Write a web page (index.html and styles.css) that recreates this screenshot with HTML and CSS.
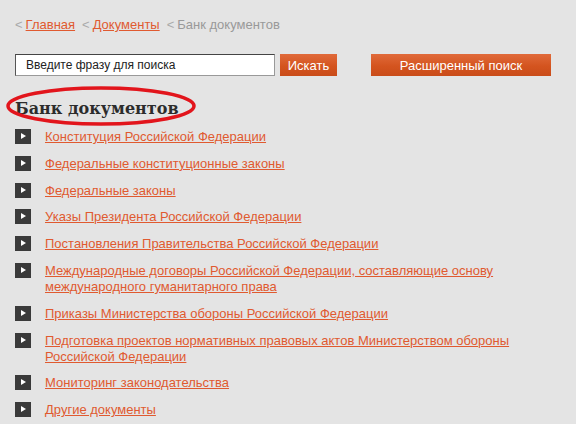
FILE: index.html
```html
<!DOCTYPE html>
<html lang="ru">
<head>
<meta charset="utf-8">
<link rel="stylesheet" href="styles.css">
</head>
<body>
<div class="page">
  <nav class="crumbs">
    <span class="sep">&lt;</span><a href="#">Главная</a>
    <span class="sep">&lt;</span><a href="#">Документы</a>
    <span class="sep">&lt;</span><span class="current">Банк документов</span>
  </nav>
  <div class="search">
    <div class="field">Введите фразу для поиска</div>
    <button class="btn btn-go">Искать</button>
    <button class="btn btn-adv">Расширенный поиск</button>
  </div>
  <div class="title-wrap">
    <h1 class="title">Банк документов</h1>
    <svg class="ring" width="192" height="40" viewBox="0 0 192 40"><ellipse cx="95" cy="20" rx="93" ry="18" fill="none" stroke="#e2151c" stroke-width="3.5"/></svg>
  </div>
  <ul class="docs">
    <li><span class="bullet"></span><a href="#">Конституция Российской Федерации</a></li>
    <li><span class="bullet"></span><a href="#">Федеральные конституционные законы</a></li>
    <li><span class="bullet"></span><a href="#">Федеральные законы</a></li>
    <li><span class="bullet"></span><a href="#">Указы Президента Российской Федерации</a></li>
    <li><span class="bullet"></span><a href="#">Постановления Правительства Российской Федерации</a></li>
    <li><span class="bullet"></span><a href="#">Международные договоры Российской Федерации, составляющие основу международного гуманитарного права</a></li>
    <li><span class="bullet"></span><a href="#">Приказы Министерства обороны Российской Федерации</a></li>
    <li><span class="bullet"></span><a href="#">Подготовка проектов нормативных правовых актов Министерством обороны Российской Федерации</a></li>
    <li><span class="bullet"></span><a href="#">Мониторинг законодательства</a></li>
    <li><span class="bullet"></span><a href="#">Другие документы</a></li>
  </ul>
</div>
</body>
</html>
```

FILE: styles.css
```css
html, body {
  margin: 0;
  padding: 0;
  background: #e4e4e4;
}
body {
  font-family: "Liberation Sans", Arial, sans-serif;
  font-size: 13px;
  color: #333;
}
.page {
  padding: 17px 0 0 15px;
  width: 537px;
}
a {
  color: #e05a30;
  text-decoration: underline;
}
.crumbs {
  color: #999;
  line-height: 16px;
  display: flex;
  white-space: pre;
}
.crumbs .sep {
  color: #aaa;
  margin-right: 3px;
}
.crumbs a {
  margin-right: 7px;
}
.current {
  color: #999;
}
.search {
  display: flex;
  align-items: center;
  margin-top: 21px;
  height: 22px;
}
.field {
  box-sizing: border-box;
  width: 260px;
  height: 22px;
  background: #fff;
  border: 1px solid #999;
  border-top-color: #444;
  border-left-color: #555;
  padding: 3px 0 0 10px;
  font-size: 12px;
  color: #222;
  line-height: 15px;
}
.btn {
  height: 22px;
  border: 0;
  padding: 0;
  color: #fff;
  font-family: "Liberation Sans", Arial, sans-serif;
  font-size: 13px;
  background: linear-gradient(#e06a3a, #d4541f 55%, #c94c1a);
}
.btn-go {
  margin-left: 5px;
  width: 57px;
}
.btn-adv {
  margin-left: 34px;
  width: 180px;
}
.title-wrap {
  position: relative;
  margin-top: 18px;
  height: 40px;
}
.title {
  margin: 0;
  padding-top: 2px;
  font-family: "DejaVu Serif", Georgia, serif;
  font-weight: bold;
  font-size: 16px;
  color: #2c2c2c;
  line-height: 26px;
}
.ring {
  position: absolute;
  left: -9px;
  top: -8px;
}
.docs {
  list-style: none;
  margin: -5px 0 0 0;
  padding: 0;
}
.docs li {
  display: flex;
  align-items: flex-start;
  line-height: 16px;
  margin-bottom: 10.8px;
}
.bullet {
  flex: none;
  width: 16px;
  height: 15px;
  margin-right: 14px;
  background: #3a3a3a;
  position: relative;
}
.bullet::after {
  content: "";
  position: absolute;
  left: 6px;
  top: 4px;
  border-left: 5px solid #fff;
  border-top: 3.5px solid transparent;
  border-bottom: 3.5px solid transparent;
}
.docs a {
  width: 470px;
}
```
